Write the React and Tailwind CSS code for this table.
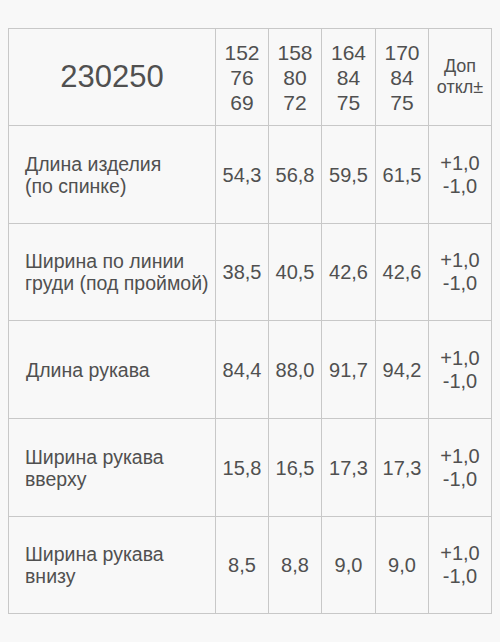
import React from 'react';

const sizes = [
  ['152', '76', '69'],
  ['158', '80', '72'],
  ['164', '84', '75'],
  ['170', '84', '75'],
];

const rows = [
  { label: ['Длина изделия', '(по спинке)'], values: ['54,3', '56,8', '59,5', '61,5'] },
  { label: ['Ширина по линии', 'груди (под проймой)'], values: ['38,5', '40,5', '42,6', '42,6'] },
  { label: ['Длина рукава'], values: ['84,4', '88,0', '91,7', '94,2'], shift: true },
  { label: ['Ширина рукава', 'вверху'], values: ['15,8', '16,5', '17,3', '17,3'] },
  { label: ['Ширина рукава', 'внизу'], values: ['8,5', '8,8', '9,0', '9,0'] },
];

const cell = 'border-r border-b border-[#c8c8c8] flex items-center';

export default function App() {
  return (
    <div className="min-h-[642px] w-[500px] bg-[#f8f8f8] pt-[28px] pl-[8px] font-['Liberation_Sans',Arial,sans-serif] text-[#505050]">
      <div className="grid w-[484px] grid-cols-[207px_53px_53px_54px_53px_63px] grid-rows-[97px_98px_97px_98px_98px_97px] border-t border-l border-[#c8c8c8]">
        {/* header */}
        <div className={`${cell} justify-center text-[31px]`}>230250</div>
        {sizes.map((s, i) => (
          <div key={i} className={`${cell} flex-col justify-center text-center text-[21px] leading-[25px]`}>
            {s.map((n) => (
              <span key={n}>{n}</span>
            ))}
          </div>
        ))}
        <div className={`${cell} flex-col justify-center text-center text-[18px] leading-[21px]`}>
          <span>Доп</span>
          <span>откл±</span>
        </div>

        {rows.map((r, i) => (
          <React.Fragment key={i}>
            <div className={`${cell} ${r.shift ? 'pl-[17px]' : 'pl-[16px]'} text-[19.5px] leading-[22px]`}>
              <div className="flex flex-col">
                {r.label.map((t) => (
                  <span key={t} className="whitespace-nowrap">{t}</span>
                ))}
              </div>
            </div>
            {r.values.map((v, j) => (
              <div key={j} className={`${cell} justify-center text-[20px]`}>
                {v}
              </div>
            ))}
            <div className={`${cell} flex-col justify-center text-center text-[20px] leading-[23px]`}>
              <span>+1,0</span>
              <span>-1,0</span>
            </div>
          </React.Fragment>
        ))}
      </div>
    </div>
  );
}
